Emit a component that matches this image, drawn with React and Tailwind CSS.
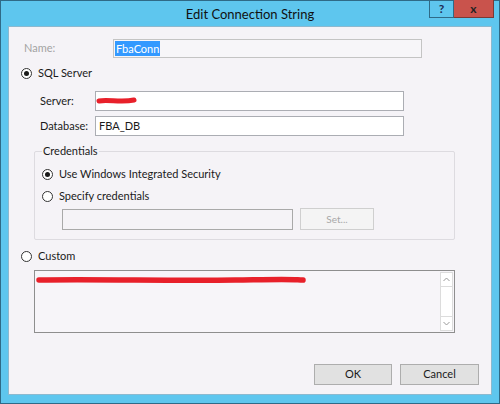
import React from "react";

function Radio({ checked }) {
  return (
    <span className="relative flex h-[11px] w-[11px] items-center justify-center rounded-full border border-[#333] bg-white">
      {checked && <span className="h-[5px] w-[5px] rounded-full bg-[#1a1a1a]" />}
    </span>
  );
}

export default function App() {
  return (
    <div
      className="flex h-[404px] w-[500px] flex-col border border-[#2f6a87] bg-[#5ec6ee] text-[11px] text-[#1a1a1a]"
      style={{ fontFamily: 'Lato, "Open Sans", sans-serif' }}
    >
      {/* Title bar */}
      <div className="relative h-[25px] shrink-0">
        <div className="pt-[3px] text-center text-[13px] leading-[20px] text-[#111]">Edit Connection String</div>
        <div className="absolute right-[5px] top-[-1px] flex h-[18px]">
          <div className="flex w-[25px] items-center justify-center border border-[#2f6a87] border-t-0 text-[12px] font-bold text-[#1e2a55]">?</div>
          <div className="flex w-[40px] items-center justify-center border border-l-0 border-t-0 border-[#7a3a36] bg-[#c9534c] text-[12px] font-bold text-[#222]">x</div>
        </div>
      </div>

      {/* Content */}
      <div className="mx-[7px] mb-[8px] flex-1 border border-[#8cb9cf] bg-[#f5f3f7]">
        {/* Name */}
        <div className="mt-[12px] flex items-center">
          <div className="ml-[15px] w-[89px] text-[#a3a3a3]">Name:</div>
          <div className="flex h-[19px] w-[309px] items-center border border-[#c4c4c4] bg-[#f7f6f9] px-[1px]">
            <span className="bg-[#3399ff] px-[1px] leading-[15px] text-white">FbaConn</span>
          </div>
        </div>

        {/* SQL Server radio */}
        <div className="mt-[7px] flex h-[16px] items-center">
          <div className="ml-[12px]"><Radio checked /></div>
          <span className="ml-[6px]">SQL Server</span>
        </div>

        {/* Server */}
        <div className="mt-[10px] flex items-center">
          <div className="ml-[31px] w-[55px]">Server:</div>
          <div className="relative h-[20px] w-[309px] border border-[#abadb3] bg-white">
            <svg className="absolute left-0 top-0" width="45" height="18">
              <path d="M3 9 C12 7, 25 11, 38 8" stroke="#e8202a" strokeWidth="5" strokeLinecap="round" fill="none" />
            </svg>
          </div>
        </div>

        {/* Database */}
        <div className="mt-[5px] flex items-center">
          <div className="ml-[31px] w-[55px]">Database:</div>
          <div className="flex h-[20px] w-[309px] items-center border border-[#abadb3] bg-white px-[3px]">FBA_DB</div>
        </div>

        {/* Credentials group */}
        <div className="relative ml-[25px] mt-[15px] h-[89px] w-[421px] rounded-[2px] border border-[#dddbe0]">
          <span className="absolute left-[7px] top-[-9px] bg-[#f5f3f7] px-[1px] leading-[16px]">Credentials</span>
          <div className="mt-[14px] flex h-[16px] items-center">
            <div className="ml-[7px]"><Radio checked /></div>
            <span className="ml-[6px]">Use Windows Integrated Security</span>
          </div>
          <div className="mt-[6px] flex h-[16px] items-center">
            <div className="ml-[7px]"><Radio /></div>
            <span className="ml-[6px]">Specify credentials</span>
          </div>
          <div className="mt-[4px] flex items-center">
            <div className="ml-[27px] h-[21px] w-[231px] border border-[#a9a9a9] bg-[#f5f3f7]" />
            <div className="ml-[7px] flex h-[22px] w-[74px] items-center justify-center border border-[#cfcfcf] bg-[#f4f4f4] text-[10px] text-[#a8a8a8]">Set...</div>
          </div>
        </div>

        {/* Custom radio */}
        <div className="mt-[8px] flex h-[16px] items-center">
          <div className="ml-[12px]"><Radio /></div>
          <span className="ml-[6px]">Custom</span>
        </div>

        {/* Custom textarea */}
        <div className="ml-[25px] mt-[6px] flex h-[63px] w-[421px] border border-[#8e8e8e] bg-[#f7f5f9]">
          <div className="relative flex-1">
            <svg className="absolute left-0 top-0" width="275" height="20">
              <path d="M4 9 C60 8, 140 10, 200 9 S250 8, 268 9" stroke="#e8202a" strokeWidth="5.5" strokeLinecap="round" fill="none" />
            </svg>
          </div>
          <div className="my-[1px] mr-[1px] flex w-[13px] flex-col border border-[#dcdcdc] bg-white">
            <div className="flex h-[14px] items-center justify-center border-b border-[#dcdcdc]">
              <svg width="7" height="5"><path d="M0.5 4 L3.5 1 L6.5 4" stroke="#9a9a9a" strokeWidth="1" fill="none" /></svg>
            </div>
            <div className="flex-1" />
            <div className="flex h-[14px] items-center justify-center border-t border-[#dcdcdc]">
              <svg width="7" height="5"><path d="M0.5 1 L3.5 4 L6.5 1" stroke="#9a9a9a" strokeWidth="1" fill="none" /></svg>
            </div>
          </div>
        </div>

        {/* Buttons */}
        <div className="mr-[12px] mt-[31px] flex justify-end gap-[8px]">
          <div className="flex h-[21px] w-[78px] items-center justify-center border border-[#adadad] bg-[#e1e1e1]">OK</div>
          <div className="flex h-[21px] w-[79px] items-center justify-center border border-[#adadad] bg-[#e1e1e1]">Cancel</div>
        </div>
      </div>
    </div>
  );
}
